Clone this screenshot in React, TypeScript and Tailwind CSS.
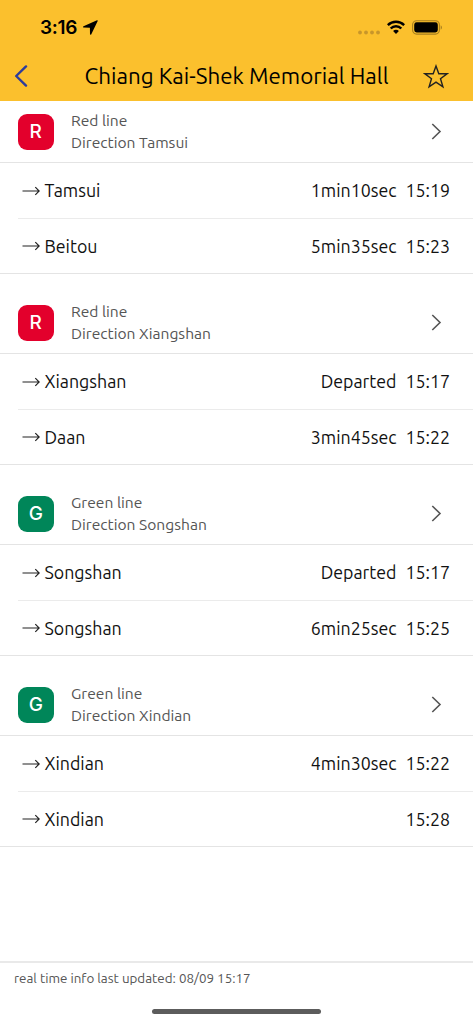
type Arrival = { to: string; wait: string; time: string };
type Line = { code: string; name: string; direction: string; badge: string; arrivals: Arrival[] };

const LINES: Line[] = [
  {
    code: "R",
    name: "Red line",
    direction: "Tamsui",
    badge: "bg-[#e3002c]",
    arrivals: [
      { to: "Tamsui", wait: "1min10sec", time: "15:19" },
      { to: "Beitou", wait: "5min35sec", time: "15:23" },
    ],
  },
  {
    code: "R",
    name: "Red line",
    direction: "Xiangshan",
    badge: "bg-[#e3002c]",
    arrivals: [
      { to: "Xiangshan", wait: "Departed", time: "15:17" },
      { to: "Daan", wait: "3min45sec", time: "15:22" },
    ],
  },
  {
    code: "G",
    name: "Green line",
    direction: "Songshan",
    badge: "bg-[#008659]",
    arrivals: [
      { to: "Songshan", wait: "Departed", time: "15:17" },
      { to: "Songshan", wait: "6min25sec", time: "15:25" },
    ],
  },
  {
    code: "G",
    name: "Green line",
    direction: "Xindian",
    badge: "bg-[#008659]",
    arrivals: [
      { to: "Xindian", wait: "4min30sec", time: "15:22" },
      { to: "Xindian", wait: "", time: "15:28" },
    ],
  },
];

function StatusBar() {
  return (
    <div className="flex h-[54px] items-center pl-10 pr-[30px]">
      <span className="font-['Inter'] text-[19px] font-semibold leading-none tracking-[-0.3px]">3:16</span>
      <svg className="ml-[6px]" width="15" height="15" viewBox="0 0 15 15">
        <path d="M14 .3.5 6.300c-.7.3-.5 1.300.2 1.300l6.200.2.1 6.200c0 .8 1 1 1.300.2L14.700 1c.2-.5-.2-.9-.7-.7Z" />
      </svg>

      <svg className="ml-auto mt-[10px]" width="22" height="5" viewBox="0 0 22 5" fill="#c8962a">
        <circle cx="2" cy="2.500" r="1.900" />
        <circle cx="8" cy="2.500" r="1.900" />
        <circle cx="14" cy="2.500" r="1.900" />
        <circle cx="20" cy="2.500" r="1.900" />
      </svg>
      <svg className="ml-[7px]" width="18" height="14" viewBox="0 0 18 14" fill="none" stroke="#000" strokeWidth="2.500">
        <path d="M.8 5.100a11.700 11.700 0 0 1 16.400 0" />
        <path d="M3.700 8.500a7.400 7.400 0 0 1 10.600 0" />
        <path d="M9 14 6.100 11.100a4 4 0 0 1 5.800 0Z" fill="#000" stroke="none" />
      </svg>
      <svg className="ml-[7px]" width="31" height="15" viewBox="0 0 31 15">
        <rect x=".6" y=".7" width="26.800" height="13.400" rx="4" fill="none" stroke="#a67e1f" strokeWidth="1.100" />
        <rect x="2.200" y="2.300" width="23.600" height="10.200" rx="2.400" />
        <path d="M28.700 5.200v4.500c1.700-.7 1.700-3.800 0-4.500Z" fill="#a67e1f" />
      </svg>
    </div>
  );
}

function TitleBar() {
  return (
    <div className="flex h-[47px] items-center justify-between pb-[3px] pl-[14px] pr-6">
      <button aria-label="Back">
        <svg width="14" height="22" viewBox="0 0 14 22" fill="none" stroke="#2d3c9c" strokeWidth="2.400" strokeLinecap="round" strokeLinejoin="round">
          <path d="M12 1.400 2.200 11 12 20.600" />
        </svg>
      </button>
      <h1 className="ml-[22px] whitespace-nowrap text-[22.400px] leading-[28px]">Chiang Kai-Shek Memorial Hall</h1>
      <button aria-label="Favorite">
        <svg width="26" height="25" viewBox="0 0 26 25" fill="none" stroke="#222" strokeWidth="1.400" strokeLinejoin="miter">
          <path d="m13 2 2.800 7.800h8.200l-6.500 5 2.400 8L13 18.100l-6.900 4.700 2.400-8L2 9.800h8.200Z" />
        </svg>
      </button>
    </div>
  );
}

function LineHeader({ line, first }: { line: Line; first: boolean }) {
  return (
    <div className={`flex items-end border-b border-[#e4e4e4] pl-[18px] pr-[31px] ${first ? "h-[62px]" : "h-20"}`}>
      <div className={`mb-[12.500px] flex h-[35.500px] w-[35.500px] items-center justify-center rounded-[9px] font-['Inter'] text-[19px] font-medium text-white ${line.badge}`}>
        {line.code}
      </div>
      <div className="mb-[9px] ml-[17.500px] text-[15.600px] leading-[22px] text-[#555]">
        <p>{line.name}</p>
        <p>Direction {line.direction}</p>
      </div>
      <svg className="mb-[22px] ml-auto" width="11" height="17" viewBox="0 0 11 17" fill="none" stroke="#555" strokeWidth="1.600">
        <path d="m1.300 1 7.700 7.500L1.300 16" />
      </svg>
    </div>
  );
}

function ArrivalRow({ arrival, last }: { arrival: Arrival; last: boolean }) {
  return (
    <div className={last ? "border-b border-[#e4e4e4]" : "pl-[18px]"}>
      <div className={`flex items-center pr-[23px] text-[17.800px] leading-[27px] text-[#111] ${last ? "h-[54px] pl-[22px]" : "h-14 border-b border-[#ebebeb] pl-1"}`}>
        <svg className="mr-[4.500px]" width="18" height="10" viewBox="0 0 18 10" fill="none" stroke="#222" strokeWidth="1.200">
          <path d="M.5 5h16.500M13.300 1.100 17.200 5l-3.900 3.900" />
        </svg>
        <span>{arrival.to}</span>
        <span className="ml-auto">{arrival.wait}</span>
        <span className="ml-[9px]">{arrival.time}</span>
      </div>
    </div>
  );
}

export default function App() {
  return (
    <div className="flex h-screen w-full flex-col overflow-hidden bg-white font-['Ubuntu','Noto_Sans',sans-serif] text-black">
      <header className="h-[101px] shrink-0 bg-[#fbc02d]">
        <StatusBar />
        <TitleBar />
      </header>

      <main className="flex-1">
        {LINES.map((line, i) => (
          <section key={i}>
            <LineHeader line={line} first={i === 0} />
            {line.arrivals.map((a, j) => (
              <ArrivalRow key={j} arrival={a} last={j === line.arrivals.length - 1} />
            ))}
          </section>
        ))}
      </main>

      <footer className="flex h-[63px] shrink-0 flex-col items-center border-t-2 border-[#e9e9e9]">
        <p className="w-full pl-[14px] pt-[6px] text-[13.400px] leading-5 text-[#555]">real time info last updated: 08/09 15:17</p>
        <div className="mt-5 h-[5px] w-[169px] rounded-full bg-[#5c5c5c]" />
      </footer>
    </div>
  );
}
